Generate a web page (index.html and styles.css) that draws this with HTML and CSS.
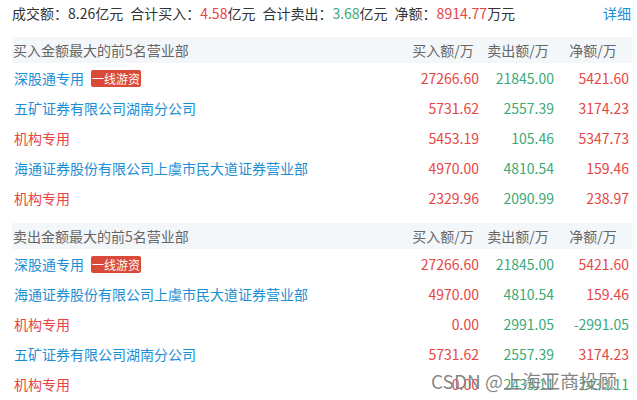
FILE: index.html
```html
<!DOCTYPE html>
<html lang="zh">
<head>
<meta charset="utf-8">
<link rel="stylesheet" href="styles.css">
</head>
<body>
<div class="page">
  <div class="summary">
    <div class="stats">
      <span>成交额：8.26亿元</span>
      <span>合计买入：<em class="up">4.58</em>亿元</span>
      <span>合计卖出：<em class="down">3.68</em>亿元</span>
      <span>净额：<em class="up">8914.77</em>万元</span>
    </div>
    <a class="more">详细</a>
  </div>

  <section class="block">
    <div class="row head">
      <div class="name">买入金额最大的前5名营业部</div>
      <div class="col">买入额/万</div>
      <div class="col">卖出额/万</div>
      <div class="col">净额/万</div>
    </div>
    <div class="row">
      <div class="name blue">深股通专用<span class="tag">一线游资</span></div>
      <div class="num up">27266.60</div><div class="num down">21845.00</div><div class="num up">5421.60</div>
    </div>
    <div class="row">
      <div class="name blue">五矿证券有限公司湖南分公司</div>
      <div class="num up">5731.62</div><div class="num down">2557.39</div><div class="num up">3174.23</div>
    </div>
    <div class="row">
      <div class="name red">机构专用</div>
      <div class="num up">5453.19</div><div class="num down">105.46</div><div class="num up">5347.73</div>
    </div>
    <div class="row">
      <div class="name blue">海通证券股份有限公司上虞市民大道证券营业部</div>
      <div class="num up">4970.00</div><div class="num down">4810.54</div><div class="num up">159.46</div>
    </div>
    <div class="row">
      <div class="name red">机构专用</div>
      <div class="num up">2329.96</div><div class="num down">2090.99</div><div class="num up">238.97</div>
    </div>
  </section>

  <section class="block">
    <div class="row head">
      <div class="name">卖出金额最大的前5名营业部</div>
      <div class="col">买入额/万</div>
      <div class="col">卖出额/万</div>
      <div class="col">净额/万</div>
    </div>
    <div class="row">
      <div class="name blue">深股通专用<span class="tag">一线游资</span></div>
      <div class="num up">27266.60</div><div class="num down">21845.00</div><div class="num up">5421.60</div>
    </div>
    <div class="row">
      <div class="name blue">海通证券股份有限公司上虞市民大道证券营业部</div>
      <div class="num up">4970.00</div><div class="num down">4810.54</div><div class="num up">159.46</div>
    </div>
    <div class="row">
      <div class="name red">机构专用</div>
      <div class="num up">0.00</div><div class="num down">2991.05</div><div class="num down">-2991.05</div>
    </div>
    <div class="row">
      <div class="name blue">五矿证券有限公司湖南分公司</div>
      <div class="num up">5731.62</div><div class="num down">2557.39</div><div class="num up">3174.23</div>
    </div>
    <div class="row">
      <div class="name red">机构专用</div>
      <div class="num up">0.00</div><div class="num down">2433.11</div><div class="num down">-2433.11</div>
    </div>
  </section>
</div>
<div class="watermark">CSDN @上海亚商投顾</div>
</body>
</html>
```

FILE: styles.css
```css
html, body {
  margin: 0;
  padding: 0;
  background: #fff;
}
body {
  font-family: "Noto Sans CJK SC", "Noto Sans", sans-serif;
  font-size: 14px;
  color: #333;
  width: 637px;
  height: 400px;
  overflow: hidden;
  position: relative;
}
.page {
  padding: 0 5px 0 12px;
}
.summary {
  display: flex;
  justify-content: space-between;
  align-items: center;
  height: 25px;
  margin-bottom: 12px;
}
.stats {
  display: flex;
  gap: 7px;
}
.summary em {
  font-style: normal;
}
.more {
  color: #1a8fd6;
  padding-right: 1px;
}
.block {
  margin-bottom: 10px;
}
.row {
  display: grid;
  grid-template-columns: 1fr 75px 75px 75px;
  align-items: center;
  height: 30px;
  line-height: 20px;
}
.row.head {
  height: 26px;
  background: #f4f7fa;
  color: #666;
}
.name {
  padding-left: 2px;
  display: flex;
  align-items: center;
  white-space: nowrap;
}
.row.head .name {
  padding-left: 1px;
}
.col {
  text-align: center;
  padding-right: 3px;
}
.num {
  text-align: right;
  padding-right: 3px;
}
.blue { color: #1a8fd6; }
.red { color: #e84545; }
.up { color: #e84545; }
.down { color: #3aaa78; }
.tag {
  margin-left: 7px;
  background: #db4a38;
  color: #fff;
  font-size: 12px;
  line-height: 17px;
  height: 17px;
  padding: 0 1px;
  border-radius: 2px;
}
.watermark {
  position: absolute;
  left: 431px;
  top: 368px;
  font-size: 19px;
  line-height: 26px;
  color: rgba(85, 85, 85, 0.72);
  text-shadow: 0 0 1px rgba(255,255,255,0.8);
  white-space: nowrap;
}
```
